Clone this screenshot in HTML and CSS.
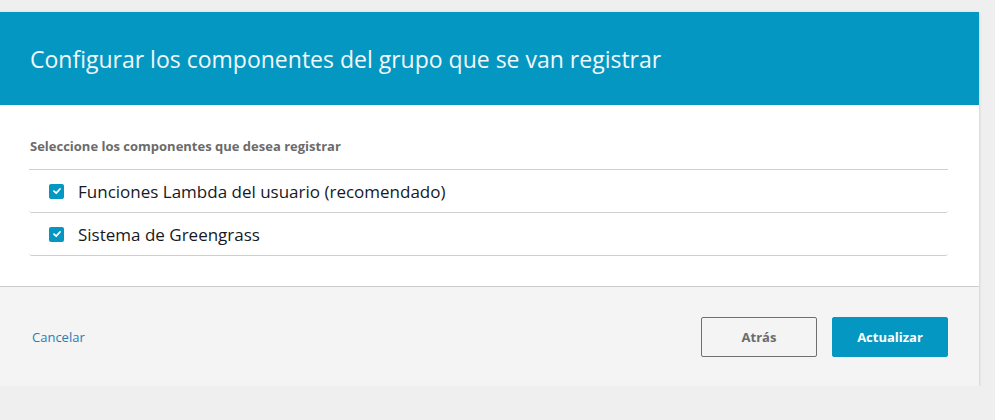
FILE: index.html
```html
<!DOCTYPE html>
<html>
<head>
  <title>Configurar componentes</title>
  <link rel="stylesheet" href="styles.css">
</head>
<body>
  <div class="modal">
    <div class="modal-header">
      <h2>Configurar los componentes del grupo que se van registrar</h2>
    </div>

    <div class="modal-body">
      <div class="field-label">Seleccione los componentes que desea registrar</div>
      <ul class="check-list">
        <li>
          <span class="checkbox">
            <svg width="10" height="10" viewBox="0 0 10 10"><path d="M2 5.2 L4.2 7.2 L8 3" fill="none" stroke="#fff" stroke-width="1.8" stroke-linecap="round" stroke-linejoin="round"/></svg>
          </span>
          <span>Funciones Lambda del usuario (recomendado)</span>
        </li>
        <li>
          <span class="checkbox">
            <svg width="10" height="10" viewBox="0 0 10 10"><path d="M2 5.2 L4.2 7.2 L8 3" fill="none" stroke="#fff" stroke-width="1.8" stroke-linecap="round" stroke-linejoin="round"/></svg>
          </span>
          <span>Sistema de Greengrass</span>
        </li>
      </ul>
    </div>

    <div class="modal-footer">
      <a href="#" class="cancel-link">Cancelar</a>
      <div class="actions">
        <button class="btn btn-secondary">Atrás</button>
        <button class="btn btn-primary">Actualizar</button>
      </div>
    </div>
  </div>
</body>
</html>
```

FILE: styles.css
```css
body {
  font-family: "Open Sans", Arial, sans-serif;
  margin: 0;
  background-color: #efefef;
}

.modal {
  width: 979px;
  margin-top: 12px;
  background-color: #fff;
  box-shadow: 0 1px 3px rgba(0, 0, 0, 0.2);
}

.modal-header {
  height: 93px;
  padding: 0 30px;
  display: flex;
  align-items: center;
  background-color: #0497c1;
}

.modal-header h2 {
  margin: 0;
  font-size: 23px;
  font-weight: normal;
  color: #f2f8fb;
}

.modal-body {
  padding: 33px 31px 30px 29px;
}

.field-label {
  padding-left: 1px;
  font-size: 13px;
  line-height: 16px;
  font-weight: bold;
  color: #6b6b6b;
  margin-bottom: 15px;
}

.check-list {
  list-style: none;
  margin: 0;
  padding: 0;
  border-top: 1px solid #cfcfcf;
}

.check-list li {
  height: 42px;
  display: flex;
  align-items: center;
  gap: 14px;
  padding-left: 20px;
  border-bottom: 1px solid #cfcfcf;
  border-radius: 0 0 3px 3px;
  font-size: 17px;
  color: #16191f;
}

.checkbox {
  width: 15px;
  height: 15px;
  border-radius: 2px;
  background-color: #0497c1;
  display: flex;
  align-items: center;
  justify-content: center;
}

.modal-footer {
  display: flex;
  align-items: center;
  justify-content: space-between;
  padding: 30px 31px 29px 32px;
  background-color: #f4f4f4;
  border-top: 1px solid #cccccc;
}

.cancel-link {
  font-size: 13px;
  color: #2a7ab8;
  text-decoration: none;
}

.actions {
  display: flex;
  gap: 15px;
}

.btn {
  width: 116px;
  height: 40px;
  font-family: inherit;
  font-size: 13px;
  font-weight: bold;
  border-radius: 2px;
  cursor: pointer;
}

.btn-secondary {
  background-color: #f4f4f4;
  border: 1px solid #6f6f6f;
  color: #6b6b6b;
}

.btn-primary {
  background-color: #0497c1;
  border: 1px solid #0497c1;
  color: #fff;
}
```
